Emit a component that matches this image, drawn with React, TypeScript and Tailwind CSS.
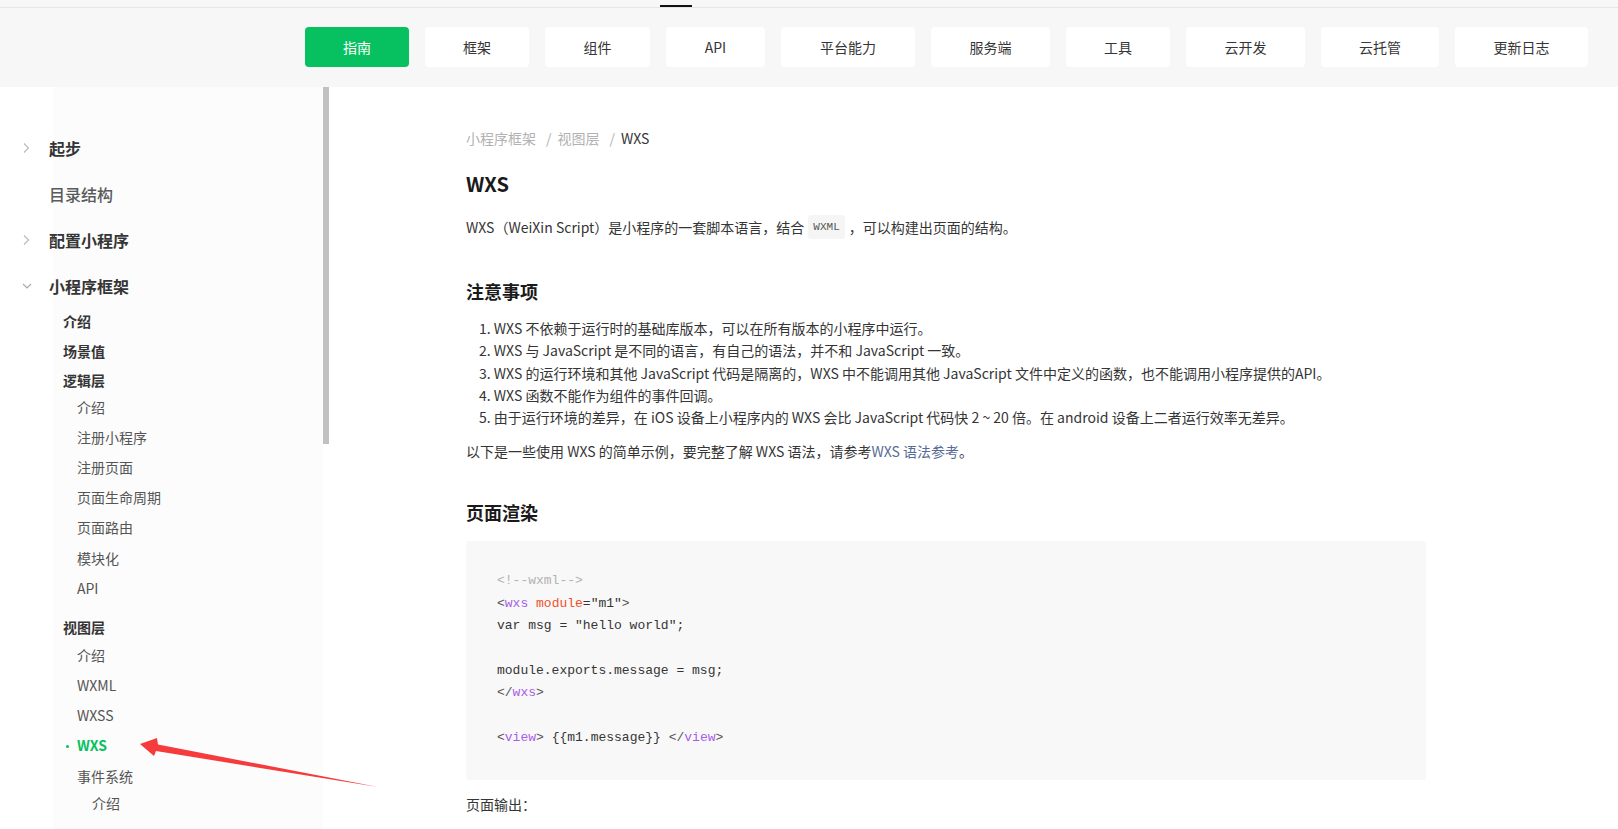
import React from "react";

const FONT = { fontFamily: '"Noto Sans CJK SC", "Noto Sans", sans-serif' };
const MONO = { fontFamily: '"Liberation Mono", "DejaVu Sans Mono", monospace' };

type NavItem = { label: string; w: string; active?: boolean };
const navItems: NavItem[] = [
  { label: "指南", w: "w-[104px]", active: true },
  { label: "框架", w: "w-[104px]" },
  { label: "组件", w: "w-[105px]" },
  { label: "API", w: "w-[99px]" },
  { label: "平台能力", w: "w-[134px]" },
  { label: "服务端", w: "w-[119px]" },
  { label: "工具", w: "w-[104px]" },
  { label: "云开发", w: "w-[119px]" },
  { label: "云托管", w: "w-[118px]" },
  { label: "更新日志", w: "w-[133px]" },
];

function ChevronRight() {
  return (
    <svg width="8" height="12" viewBox="0 0 8 12" fill="none">
      <polyline points="2,1.5 6.5,6 2,10.5" stroke="#b8b8b8" strokeWidth="1.1" />
    </svg>
  );
}
function ChevronDown() {
  return (
    <svg width="10" height="8" viewBox="0 0 10 8" fill="none">
      <polyline points="1,2 5,6 9,2" stroke="#a8a8a8" strokeWidth="1.1" />
    </svg>
  );
}

function TopItem({ label, icon, muted }: { label: string; icon?: "right" | "down"; muted?: boolean }) {
  return (
    <div className="flex h-[46px] items-center pl-[22px]">
      <div className="flex w-[27px] items-center">
        {icon === "right" && <ChevronRight />}
        {icon === "down" && <ChevronDown />}
      </div>
      <span
        className={
          muted
            ? "text-[16px] font-medium text-[#5a5a5a]"
            : "text-[16px] font-bold text-[#353535]"
        }
      >
        {label}
      </span>
    </div>
  );
}

function GroupHead({ label, extra }: { label: string; extra?: string }) {
  return (
    <div className={"flex h-[26px] items-center pl-[63px] text-[14px] font-bold text-[#353535] " + (extra ?? "")}>
      {label}
    </div>
  );
}

function Leaf({ label, active, deep }: { label: string; active?: boolean; deep?: boolean }) {
  return (
    <div
      className={
        "relative flex h-[30.2px] items-center text-[14px] " +
        (deep ? "pl-[92px] " : "pl-[77px] ") +
        (active ? "font-bold text-[#07c160]" : "text-[#555]")
      }
    >
      {active && <span className="absolute left-[66px] top-[14px] h-[3px] w-[3px] rounded-full bg-[#07c160]" />}
      {label}
    </div>
  );
}

function Sidebar() {
  return (
    <div className="flex h-full shrink-0">
      <div className="h-full w-[323px] bg-[linear-gradient(to_right,#ffffff_53px,#fcfcfc_53px)] pt-[38px]" style={FONT}>
        <TopItem label="起步" icon="right" />
        <TopItem label="目录结构" muted />
        <TopItem label="配置小程序" icon="right" />
        <TopItem label="小程序框架" icon="down" />
        <div className="-mt-[1px]">
          <GroupHead label="介绍" />
          <GroupHead label="场景值" extra="mt-[4px]" />
          <GroupHead label="逻辑层" extra="mt-[3px]" />
          <div className="-mt-[1px]">
            <Leaf label="介绍" />
            <Leaf label="注册小程序" />
            <Leaf label="注册页面" />
            <Leaf label="页面生命周期" />
            <Leaf label="页面路由" />
            <Leaf label="模块化" />
            <Leaf label="API" />
          </div>
          <GroupHead label="视图层" extra="mt-[11px]" />
          <Leaf label="介绍" />
          <Leaf label="WXML" />
          <Leaf label="WXSS" />
          <Leaf label="WXS" active />
          <Leaf label="事件系统" />
          <div className="-mt-[3px]">
            <Leaf label="介绍" deep />
          </div>
        </div>
      </div>
      <div className="h-full w-[6px] bg-white">
        <div className="h-[357px] w-[6px] bg-[#c1c1c1]" />
      </div>
    </div>
  );
}

const P = "text-[#b2b2b2]";
const TAG = "text-[#a95ee8]";
const ATTR = "text-[#f0512a]";
const DK = "text-[#353535]";

function CodeBlock() {
  return (
    <div className="mt-[16px] h-[239px] w-[960px] rounded-[3px] bg-[#f8f8f8] pl-[31px] pt-[29px]">
      <pre className="text-[13px] leading-[22.3px] text-[#353535]" style={MONO}>
        <div className={P}>{"<!--wxml-->"}</div>
        <div>
          <span className="text-[#555]">{"<"}</span>
          <span className={TAG}>wxs</span> <span className={ATTR}>module</span>
          <span className={DK}>{'="m1"'}</span>
          <span className="text-[#555]">{">"}</span>
        </div>
        <div>{'var msg = "hello world";'}</div>
        <div>&nbsp;</div>
        <div>{"module.exports.message = msg;"}</div>
        <div>
          <span className="text-[#555]">{"</"}</span>
          <span className={TAG}>wxs</span>
          <span className="text-[#555]">{">"}</span>
        </div>
        <div>&nbsp;</div>
        <div>
          <span className="text-[#555]">{"<"}</span>
          <span className={TAG}>view</span>
          <span className="text-[#555]">{">"}</span>
          {" {{m1.message}} "}
          <span className="text-[#555]">{"</"}</span>
          <span className={TAG}>view</span>
          <span className="text-[#555]">{">"}</span>
        </div>
      </pre>
    </div>
  );
}

const listItems = [
  "WXS 不依赖于运行时的基础库版本，可以在所有版本的小程序中运行。",
  "WXS 与 JavaScript 是不同的语言，有自己的语法，并不和 JavaScript 一致。",
  "WXS 的运行环境和其他 JavaScript 代码是隔离的，WXS 中不能调用其他 JavaScript 文件中定义的函数，也不能调用小程序提供的API。",
  "WXS 函数不能作为组件的事件回调。",
  "由于运行环境的差异，在 iOS 设备上小程序内的 WXS 会比 JavaScript 代码快 2 ~ 20 倍。在 android 设备上二者运行效率无差异。",
];

function Content() {
  return (
    <div className="h-full flex-1 pl-[137px] pt-[40px] text-[#353535]" style={FONT}>
      <div className="w-[960px]">
        <div className="flex h-[22px] items-center text-[14px]">
          <span className="text-[#b2b2b2]">小程序框架</span>
          <span className="ml-[10px] mr-[6px] text-[#b2b2b2]">/</span>
          <span className="text-[#b2b2b2]">视图层</span>
          <span className="ml-[10px] mr-[6px] text-[#b2b2b2]">/</span>
          <span className="text-[#353535]">WXS</span>
        </div>
        <h1 className="mt-[21px] h-[28px] text-[20px] font-bold leading-[28px] text-[#1a1a1a]">WXS</h1>
        <p className="mt-[18px] flex h-[22px] items-center text-[14px] leading-[22px]">
          WXS（WeiXin Script）是小程序的一套脚本语言，结合
          <span
            className="mx-[4px] inline-flex h-[24px] items-center rounded-[3px] bg-[#f5f5f5] px-[5px] text-[11px] text-[#555]"
            style={MONO}
          >
            WXML
          </span>
          ，可以构建出页面的结构。
        </p>
        <h2 className="mt-[40px] h-[26px] text-[18px] font-bold leading-[26px] text-[#1a1a1a]">注意事项</h2>
        <ol className="mt-[13px] pl-[13px] text-[14px] leading-[22.3px]">
          {listItems.map((t, i) => (
            <li key={i}>
              {i + 1}. {t}
            </li>
          ))}
        </ol>
        <p className="mt-[12px] text-[14px] leading-[22px]">
          以下是一些使用 WXS 的简单示例，要完整了解 WXS 语法，请参考
          <span className="text-[#576b95]">WXS 语法参考</span>。
        </p>
        <h2 className="mt-[37px] h-[26px] text-[18px] font-bold leading-[26px] text-[#1a1a1a]">页面渲染</h2>
        <CodeBlock />
        <p className="mt-[13px] text-[14px] leading-[22px]">页面输出：</p>
      </div>
    </div>
  );
}

export default function App() {
  return (
    <div className="relative h-[829px] w-[1618px] overflow-hidden bg-white" style={FONT}>
      <div className="h-[87px] bg-[#f7f7f7]">
        <div className="flex h-[8px] items-end border-b border-[#e6e6e6]">
          <div className="ml-[660px] h-[2px] w-[32px] bg-[#111]" />
        </div>
        <nav className="flex justify-end gap-[16px] pr-[30px] pt-[19px]">
          {navItems.map((n) => (
            <div
              key={n.label}
              className={
                "flex h-[40px] items-center justify-center rounded-[4px] text-[14px] " +
                n.w +
                (n.active ? " bg-[#07c160] text-white" : " bg-white text-[#353535]")
              }
            >
              {n.label}
            </div>
          ))}
        </nav>
      </div>
      <div className="flex h-[742px]">
        <Sidebar />
        <Content />
      </div>
      <svg className="pointer-events-none absolute left-0 top-0" width="1618" height="829" viewBox="0 0 1618 829">
        <polygon points="140,744 157,738 158,744.5 378,787 156,751 154,756" fill="#f53b3b" />
      </svg>
    </div>
  );
}
